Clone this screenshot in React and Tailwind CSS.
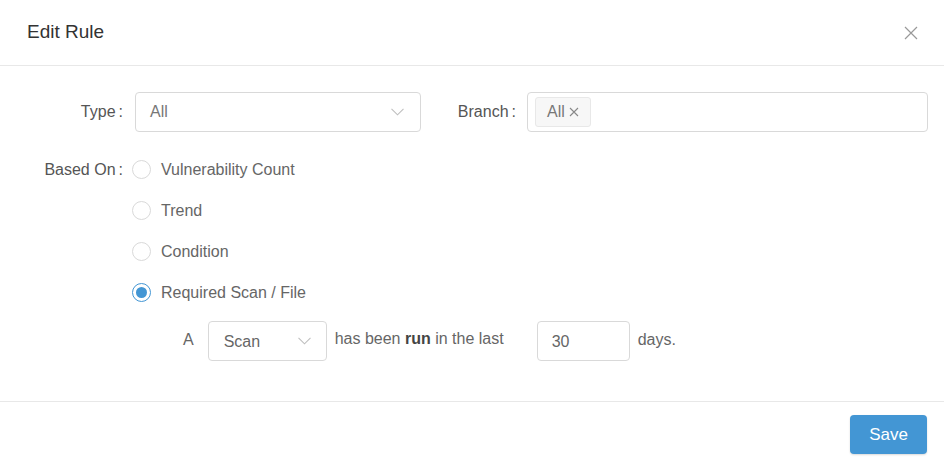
import React from "react";

function Chevron() {
  return (
    <svg width="13" height="8" viewBox="0 0 13 8" fill="none" className="shrink-0">
      <path d="M0.5 0.8 L6.5 6.8 L12.5 0.8" stroke="#bfbfbf" strokeWidth="1.1" />
    </svg>
  );
}

function Radio({ checked, label }) {
  return (
    <div className="flex items-center h-[41px]">
      <span
        className={
          checked
            ? "w-[19px] h-[19px] rounded-full border border-[#4396d4] flex items-center justify-center"
            : "w-[19px] h-[19px] rounded-full border border-[#d9d9d9]"
        }
      >
        {checked && <span className="w-[11px] h-[11px] rounded-full bg-[#4396d4]" />}
      </span>
      <span className="ml-[10px] text-[16px] text-[#666]">{label}</span>
    </div>
  );
}

function Label({ text, className }) {
  return (
    <div className={"flex justify-end text-[16px] text-[#555] " + className}>
      {text}
      <span className="ml-[3px]">:</span>
    </div>
  );
}

export default function App() {
  return (
    <div className="w-[944px] h-[467px] bg-white font-['Liberation_Sans',Arial,sans-serif] flex flex-col">
      <div className="h-[66px] px-[27px] flex items-center justify-between border-b border-[#e8e8e8]">
        <h1 className="text-[19px] text-[#333]">Edit Rule</h1>
        <svg width="14" height="14" viewBox="0 0 14 14" className="mr-[-1px]">
          <path d="M1 1 L13 13 M13 1 L1 13" stroke="#999" strokeWidth="1.2" />
        </svg>
      </div>

      <div className="pt-[26px] flex-1">
        <div className="flex items-center">
          <Label text="Type" className="w-[123px]" />
          <div className="ml-[12px] w-[286px] h-[40px] border border-[#d9d9d9] rounded-[4px] flex items-center justify-between pl-[14px] pr-[16px]">
            <span className="text-[16px] text-[#777]">All</span>
            <Chevron />
          </div>
          <Label text="Branch" className="w-[95px]" />
          <div className="ml-[11px] w-[401px] h-[40px] border border-[#d9d9d9] rounded-[4px] flex items-center pl-[7px]">
            <span className="h-[30px] px-[11px] bg-[#f7f7f7] border border-[#e8e8e8] rounded-[3px] flex items-center text-[16px] text-[#777]">
              All
              <svg width="10" height="10" viewBox="0 0 10 10" className="ml-[4px]">
                <path d="M1 1 L9 9 M9 1 L1 9" stroke="#888" strokeWidth="1.1" />
              </svg>
            </span>
          </div>
        </div>

        <div className="flex mt-[17px]">
          <Label text="Based On" className="w-[123px] h-[41px] items-center" />
          <div className="ml-[9px] flex flex-col">
            <Radio label="Vulnerability Count" />
            <Radio label="Trend" />
            <Radio label="Condition" />
            <Radio label="Required Scan / File" checked />
          </div>
        </div>

        <div className="flex items-center mt-[8px] pl-[183px] text-[16px] text-[#666]">
          <span className="mb-[2px]">A</span>
          <div className="ml-[14px] w-[119px] h-[40px] border border-[#d9d9d9] rounded-[4px] flex items-center justify-between pl-[15px] pr-[15px]">
            <span className="text-[#666] pt-[2px]">Scan</span>
            <Chevron />
          </div>
          <span className="ml-[8px] mb-[4px]">
            has been <b className="text-[#444]">run</b> in the last
          </span>
          <div className="ml-[33px] w-[93px] h-[40px] border border-[#d9d9d9] rounded-[4px] flex items-center pl-[14px]">
            <span className="pt-[2px]">30</span>
          </div>
          <span className="ml-[8px] mb-[2px]">days.</span>
        </div>
      </div>

      <div className="h-[66px] border-t border-[#e8e8e8] flex justify-end pt-[13px] pr-[17px]">
        <button className="w-[77px] h-[39px] rounded-[4px] bg-[#4396d4] text-white text-[17px] shadow-[0_1px_2px_rgba(0,0,0,0.15)]">
          Save
        </button>
      </div>
    </div>
  );
}
